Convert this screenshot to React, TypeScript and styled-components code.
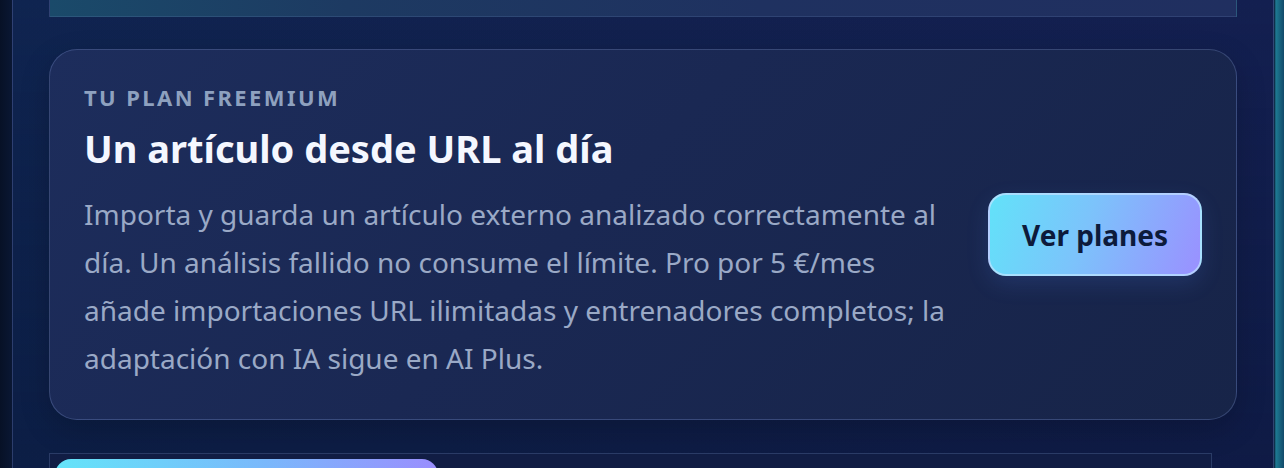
import styled, { createGlobalStyle } from "styled-components";

const GlobalStyle = createGlobalStyle`
  html, body {
    margin: 0;
    padding: 0;
    background: #081227;
  }
  body {
    font-family: "Noto Sans", "Open Sans", sans-serif;
    -webkit-font-smoothing: antialiased;
  }
`;

const Page = styled.div`
  display: flex;
  width: 1284px;
  height: 468px;
  overflow: hidden;
  background: linear-gradient(90deg, #071126 0px, #0a1733 12px, #0a1733 1274px, #1d7a92 1276px, #124a6a 1284px);
`;

const Panel = styled.main`
  margin-left: 12px;
  width: 1262px;
  flex: none;
  border-left: 1px solid rgba(120, 150, 205, 0.28);
  border-right: 1px solid rgba(120, 150, 205, 0.32);
  padding: 0 36px;
  box-sizing: border-box;
  display: flex;
  flex-direction: column;
  background:
    linear-gradient(180deg, rgba(20, 34, 82, 0) 0%, rgba(6, 18, 48, 0.35) 100%),
    linear-gradient(90deg, #0f2450 0%, #12214f 50%, #131f50 100%);
`;

const TopStrip = styled.div`
  height: 16px;
  flex: none;
  border: 1px solid rgba(120, 150, 205, 0.18);
  border-top: none;
  background: linear-gradient(90deg, #1a4a6a 0%, #1d3a62 25%, #1f3160 60%, #202f60 100%);
`;

const Card = styled.section`
  margin-top: 32px;
  height: 371px;
  flex: none;
  box-sizing: border-box;
  border: 1px solid rgba(125, 150, 210, 0.3);
  border-radius: 28px;
  padding: 0 34px 5px;
  display: flex;
  align-items: center;
  gap: 40px;
  background: linear-gradient(135deg, #1d2d5c 0%, #1a2853 45%, #172448 100%);
  box-shadow: 0 10px 30px rgba(0, 0, 0, 0.18);
`;

const TextColumn = styled.div`
  flex: 1;
  min-width: 0;
  display: flex;
  flex-direction: column;
`;

const Eyebrow = styled.div`
  font-size: 22px;
  font-weight: 700;
  letter-spacing: 2.4px;
  text-transform: uppercase;
  color: #8ea1bf;
  line-height: 28px;
`;

const Title = styled.h2`
  margin: 12px 0 0;
  font-size: 38px;
  font-weight: 700;
  color: #f4f7ff;
  line-height: 50px;
`;

const Body = styled.p`
  margin: 17px 0 0;
  font-size: 28px;
  line-height: 48px;
  color: #9aa9c6;
`;

const PlansButton = styled.button`
  flex: none;
  width: 214px;
  height: 83px;
  margin-top: 5px;
  border-radius: 18px;
  border: 2px solid rgba(190, 225, 255, 0.75);
  background: linear-gradient(110deg, #62e2f9 0%, #7cc3fb 45%, #9a90ff 100%);
  color: #0d1b3b;
  font-family: "Noto Sans", "Open Sans", sans-serif;
  font-size: 28px;
  font-weight: 700;
  cursor: pointer;
  box-shadow: 0 8px 22px rgba(90, 140, 255, 0.15);
`;

const BottomBox = styled.div`
  margin-top: 33px;
  width: 1163px;
  flex: 1;
  box-sizing: border-box;
  border: 1px solid rgba(120, 150, 205, 0.25);
  border-bottom: none;
  padding: 5px 5px 0;
  background: #111d44;
`;

const ProgressBar = styled.div`
  width: 383px;
  height: 30px;
  border-radius: 16px 16px 0 0;
  background: linear-gradient(90deg, #64e4f9 0%, #7ab8fb 55%, #9a8efe 100%);
`;

export default function App() {
  return (
    <>
      <GlobalStyle />
      <Page>
        <Panel>
          <TopStrip />
          <Card>
            <TextColumn>
              <Eyebrow>Tu plan Freemium</Eyebrow>
              <Title>Un artículo desde URL al día</Title>
              <Body>
                Importa y guarda un artículo externo analizado correctamente al
                día. Un análisis fallido no consume el límite. Pro por 5 €/mes
                añade importaciones URL ilimitadas y entrenadores completos; la
                adaptación con IA sigue en AI Plus.
              </Body>
            </TextColumn>
            <PlansButton>Ver planes</PlansButton>
          </Card>
          <BottomBox>
            <ProgressBar />
          </BottomBox>
        </Panel>
      </Page>
    </>
  );
}
